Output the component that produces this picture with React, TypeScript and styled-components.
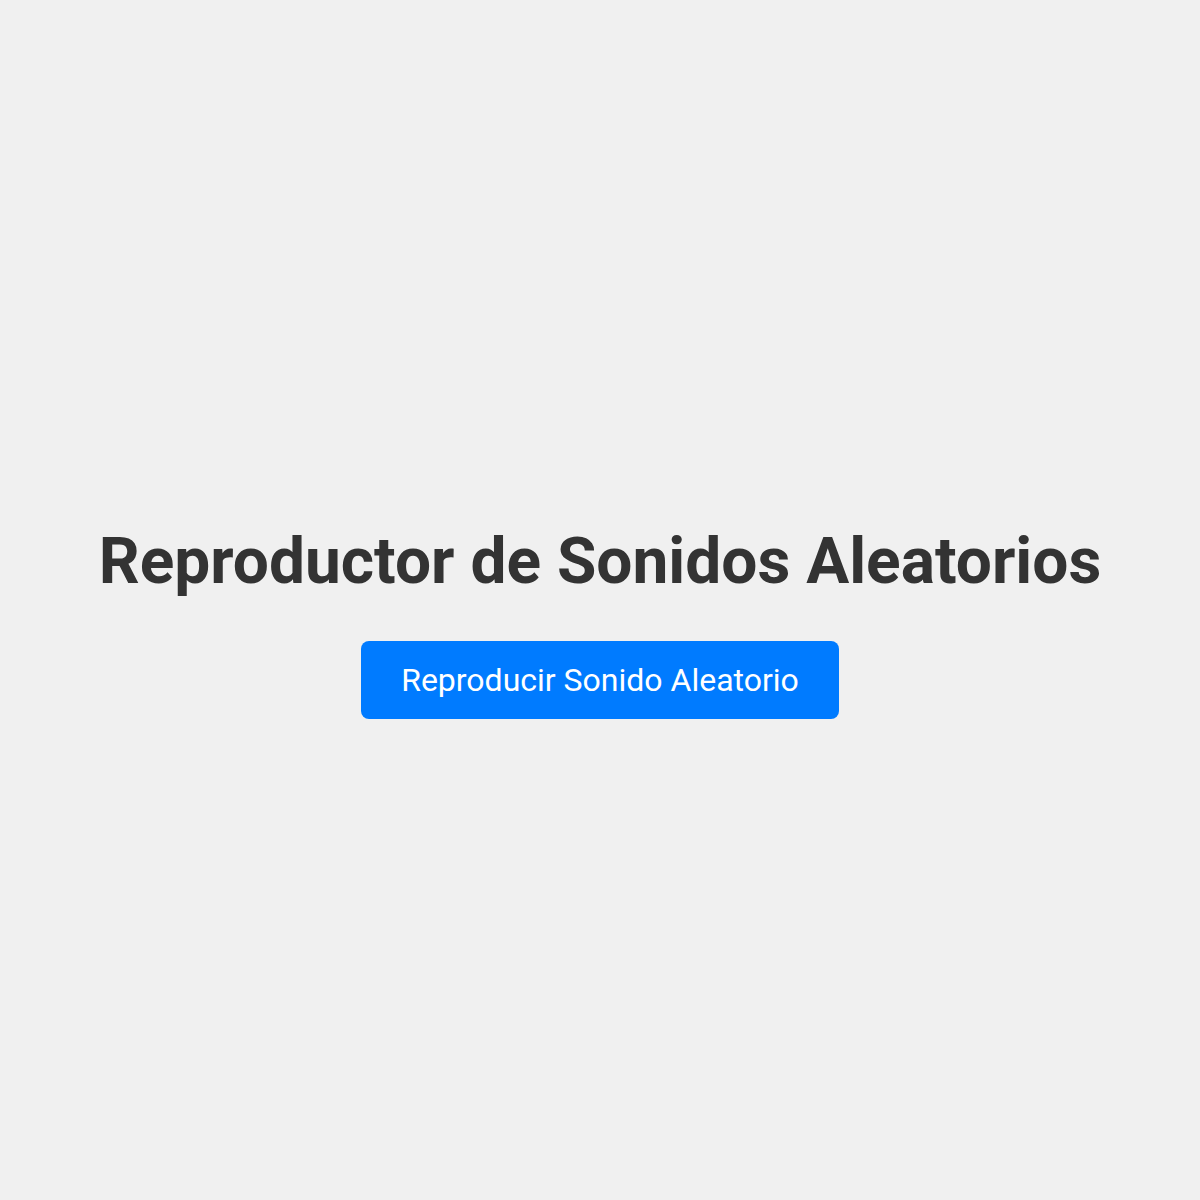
import styled, { createGlobalStyle } from 'styled-components';

const GlobalStyle = createGlobalStyle`
  body {
    margin: 0;
    background-color: #f0f0f0;
    font-family: Roboto, "Liberation Sans", sans-serif;
  }
`;

const Container = styled.div`
  display: flex;
  flex-direction: column;
  justify-content: center;
  align-items: center;
  min-height: 100vh;
  text-align: center;
`;

const Title = styled.h1`
  margin: 0.67em 0;
  color: #333;
  font-size: 64px;
  font-weight: 700;
`;

const PlayButton = styled.button`
  padding: 20px 40px;
  background-color: #007bff;
  color: #fff;
  border: none;
  border-radius: 8px;
  font-family: inherit;
  font-size: 32px;
  cursor: pointer;
  transition: background-color 0.2s;

  &:hover {
    background-color: #0069d9;
  }
`;

const sounds = ['beep', 'click', 'chime', 'pop'];

export default function App() {
  const playRandom = () => {
    const name = sounds[Math.floor(Math.random() * sounds.length)];
    try {
      const ctx = new AudioContext();
      const osc = ctx.createOscillator();
      osc.frequency.value = 220 + sounds.indexOf(name) * 110;
      osc.connect(ctx.destination);
      osc.start();
      osc.stop(ctx.currentTime + 0.3);
    } catch (err) {
      console.warn('No se pudo reproducir el sonido', err);
    }
  };

  return (
    <>
      <GlobalStyle />
      <Container>
        <Title>Reproductor de Sonidos Aleatorios</Title>
        <PlayButton onClick={playRandom}>Reproducir Sonido Aleatorio</PlayButton>
      </Container>
    </>
  );
}
